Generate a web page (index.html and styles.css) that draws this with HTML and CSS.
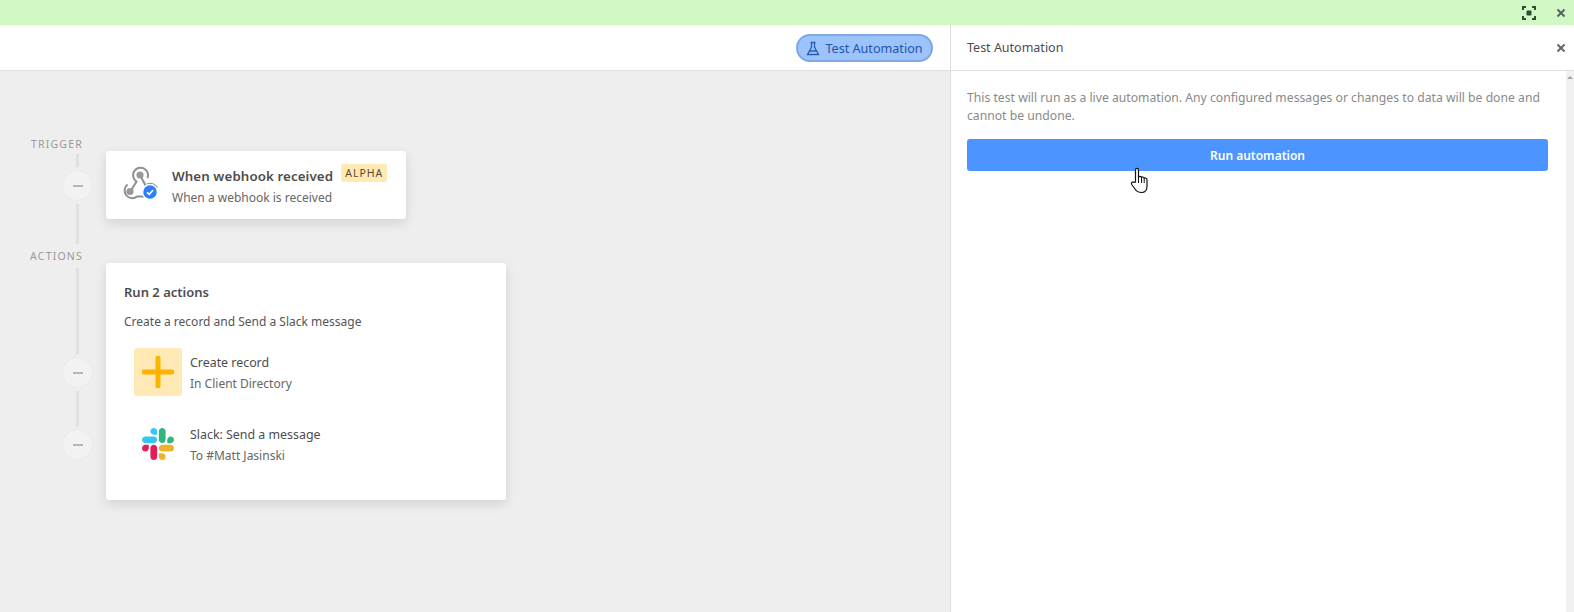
FILE: index.html
```html
<!DOCTYPE html>
<html lang="en">
<head>
  <meta charset="UTF-8">
  <meta name="viewport" content="width=device-width, initial-scale=1.0">
  <link rel="stylesheet" href="styles.css">
  <title>Test Automation</title>
</head>
<body>

  <div class="banner">
    <svg class="focusIcon" width="14" height="14" viewBox="0 0 14 14">
      <path d="M1 4V1H4M10 1H13V4M13 10V13H10M4 13H1V10" fill="none" stroke="#2f4a35" stroke-width="2"/>
      <rect x="4.5" y="4.5" width="5" height="5" rx="1" fill="#2f4a35"/>
    </svg>
    <svg class="closeIcon" width="10" height="10" viewBox="0 0 10 10">
      <path d="M1.5 1.5L8.5 8.5M8.5 1.5L1.5 8.5" stroke="#55655a" stroke-width="2"/>
    </svg>
  </div>

  <div class="main">
    <div class="left">
      <div class="toolbar">
        <button class="testBtn">
          <svg width="14" height="15" viewBox="0 0 14 15">
            <path d="M4.5 1.5H9.5M5.5 1.5V6L1.5 13.5H12.5L8.5 6V1.5M3.5 10H10.5" fill="none" stroke="#2a5cae" stroke-width="1.3"/>
          </svg>
          Test Automation
        </button>
      </div>

      <div class="canvas">
        <div class="rail">
          <div class="railLabel">TRIGGER</div>
          <div class="line lineA"></div>
          <div class="dot"></div>
          <div class="line lineB"></div>
          <div class="railLabel labelActions">ACTIONS</div>
          <div class="line lineC"></div>
          <div class="dot"></div>
          <div class="line lineD"></div>
          <div class="dot"></div>
        </div>

        <div class="cards">
          <div class="card triggerCard">
            <svg class="hookIcon" width="42" height="42" viewBox="0 0 42 42">
              <path d="M9 28L15.5 17.5A7.5 7.5 0 1 1 26.5 14" fill="none" stroke="#8f8f8f" stroke-width="2"/>
              <path d="M19 11L27 26" fill="none" stroke="#8f8f8f" stroke-width="2"/>
              <path d="M6.5 20.5A7.5 7.5 0 1 0 16 32.5H27" fill="none" stroke="#8f8f8f" stroke-width="2"/>
              <path d="M26 20.5A7.5 7.5 0 0 1 36 24" fill="none" stroke="#8f8f8f" stroke-width="2"/>
              <circle cx="19" cy="11" r="3.6" fill="#999"/>
              <circle cx="9" cy="27.5" r="3.6" fill="#999"/>
              <circle cx="29" cy="28" r="7.5" fill="#2d7ff9" stroke="#fff" stroke-width="1.5"/>
              <path d="M26 28.3L28.2 30.4L32.2 26" fill="none" stroke="#fff" stroke-width="1.6"/>
            </svg>
            <div class="triggerText">
              <div class="cardTitle">When webhook received<span class="badge">ALPHA</span></div>
              <div class="cardSub">When a webhook is received</div>
            </div>
          </div>

          <div class="card actionsCard">
            <div class="actionsTitle">Run 2 actions</div>
            <div class="actionsSub">Create a record and Send a Slack message</div>

            <div class="action">
              <div class="actionIcon plusBox">
                <svg width="32" height="32" viewBox="0 0 32 32">
                  <path d="M16 2V30M2 16H30" stroke="#fcb400" stroke-width="5" stroke-linecap="round"/>
                </svg>
              </div>
              <div>
                <div class="actionName">Create record</div>
                <div class="actionSub">In Client Directory</div>
              </div>
            </div>

            <div class="action">
              <div class="actionIcon">
                <svg width="32" height="32" viewBox="0 0 122.8 122.8">
                  <path d="M25.8 77.6c0 7.1-5.8 12.9-12.9 12.9S0 84.7 0 77.6s5.8-12.9 12.9-12.9h12.9v12.9z" fill="#e01e5a"/>
                  <path d="M32.3 77.6c0-7.1 5.8-12.9 12.9-12.9s12.9 5.8 12.9 12.9v32.3c0 7.1-5.8 12.9-12.9 12.9s-12.9-5.8-12.9-12.9V77.6z" fill="#e01e5a"/>
                  <path d="M45.2 25.8c-7.1 0-12.9-5.8-12.9-12.9S38.1 0 45.2 0s12.9 5.8 12.9 12.9v12.9H45.2z" fill="#36c5f0"/>
                  <path d="M45.2 32.3c7.1 0 12.9 5.8 12.9 12.9s-5.8 12.9-12.9 12.9H12.9C5.8 58.1 0 52.3 0 45.2s5.8-12.9 12.9-12.9h32.3z" fill="#36c5f0"/>
                  <path d="M97 45.2c0-7.1 5.8-12.9 12.9-12.9s12.9 5.8 12.9 12.9-5.8 12.9-12.9 12.9H97V45.2z" fill="#2eb67d"/>
                  <path d="M90.5 45.2c0 7.1-5.8 12.9-12.9 12.9s-12.9-5.8-12.9-12.9V12.9C64.7 5.8 70.5 0 77.6 0s12.9 5.8 12.9 12.9v32.3z" fill="#2eb67d"/>
                  <path d="M77.6 97c7.1 0 12.9 5.8 12.9 12.9s-5.8 12.9-12.9 12.9-12.9-5.8-12.9-12.9V97h12.9z" fill="#ecb22e"/>
                  <path d="M77.6 90.5c-7.1 0-12.9-5.8-12.9-12.9s5.8-12.9 12.9-12.9h32.3c7.1 0 12.9 5.8 12.9 12.9s-5.8 12.9-12.9 12.9H77.6z" fill="#ecb22e"/>
                </svg>
              </div>
              <div>
                <div class="actionName">Slack: Send a message</div>
                <div class="actionSub">To #Matt Jasinski</div>
              </div>
            </div>
          </div>
        </div>
      </div>
    </div>

    <div class="panel">
      <div class="panelHead">
        <span>Test Automation</span>
        <svg width="10" height="10" viewBox="0 0 10 10">
          <path d="M1.5 1.5L8.5 8.5M8.5 1.5L1.5 8.5" stroke="#666" stroke-width="2"/>
        </svg>
      </div>
      <div class="panelBody">
        <div class="panelContent">
          <p class="panelText">This test will run as a live automation. Any configured messages or changes to data will be done and cannot be undone.</p>
          <button class="runBtn">Run automation</button>
        </div>
        <div class="scrollbar"><span class="scrollArrow"></span></div>
      </div>
    </div>
  </div>

  <svg class="pointer" width="20" height="27" viewBox="0 0 20 27">
    <path d="M5.5 15V3.2C5.5 .8 8.5 .8 8.5 3.2V10.5C8.5 9 11.5 9 11.5 10.8C11.5 9.6 14.2 9.6 14.2 11.5C14.2 10.6 17 10.8 17 12.6V19C17 23 15 25.5 11.5 25.5C8 25.5 6.5 24.3 5 22L1.7 17.5C.5 15.5 3 14 4.3 15.5Z" fill="#fff" stroke="#111" stroke-width="1.2" stroke-linejoin="round"/>
    <path d="M8.5 10.5V16M11.5 10.8V16M14.2 11.5V16" fill="none" stroke="#111" stroke-width="1"/>
  </svg>

</body>
</html>
```

FILE: styles.css
```css
* {
  margin: 0;
  padding: 0;
  box-sizing: border-box;
}

body {
  width: 1574px;
  height: 612px;
  overflow: hidden;
  position: relative;
  background-color: #fff;
  font-family: 'Noto Sans', 'Open Sans', sans-serif;
  color: #4d4d4d;
}

.banner {
  height: 25px;
  background-color: #d1f7c4;
  display: flex;
  align-items: center;
  justify-content: flex-end;
  padding-right: 8px;
}

.focusIcon {
  margin-right: 20px;
}

.main {
  height: 587px;
  display: flex;
}

.left {
  width: 951px;
  border-right: 1px solid #dedede;
  display: flex;
  flex-direction: column;
}

.toolbar {
  height: 46px;
  background-color: #fff;
  border-bottom: 1px solid #dedede;
  display: flex;
  align-items: center;
  justify-content: flex-end;
  padding-right: 17px;
}

.testBtn {
  height: 28px;
  width: 137px;
  margin-top: 1px;
  border: 2px solid #7fa8e6;
  border-radius: 14px;
  background-color: #9cc3fb;
  color: #1f55a8;
  font-family: inherit;
  font-size: 12.6px;
  display: flex;
  align-items: center;
  justify-content: center;
  gap: 5px;
}

.canvas {
  flex: 1;
  background-color: #eee;
  display: flex;
}

.rail {
  width: 106px;
  padding-top: 63px;
  display: flex;
  flex-direction: column;
  align-items: flex-start;
}

.railLabel {
  width: 83px;
  height: 20px;
  line-height: 20px;
  text-align: right;
  font-size: 10.5px;
  letter-spacing: 1.2px;
  color: #9a9a9a;
}

.labelActions {
  height: 24px;
  line-height: 24px;
}

.line {
  width: 3px;
  margin-left: 76px;
  background-color: #e0e0e0;
}

.lineA {
  height: 13px;
  margin-bottom: 4px;
}

.lineB {
  height: 40px;
  margin-top: 4px;
}

.lineC {
  height: 86px;
  margin-bottom: 4px;
}

.lineD {
  height: 36px;
  margin-top: 4px;
  margin-bottom: 3px;
}

.dot {
  width: 29px;
  height: 29px;
  margin-left: 63px;
  border-radius: 50%;
  background-color: #f2f2f2;
  box-shadow: 0 0 2px rgba(0, 0, 0, .06);
  display: flex;
  align-items: center;
  justify-content: center;
}

.dot::after {
  content: '';
  width: 10px;
  height: 2px;
  background-color: #b5b5b5;
}

.cards {
  padding-top: 80px;
}

.card {
  background-color: #fff;
  border-radius: 3px;
  box-shadow: 0 4px 12px rgba(0, 0, 0, .12);
}

.triggerCard {
  width: 300px;
  height: 68px;
  display: flex;
  align-items: center;
  padding-left: 15px;
}

.hookIcon {
  flex: none;
  margin-right: 9px;
}

.triggerText {
  margin-top: 3px;
}

.cardTitle {
  display: flex;
  align-items: flex-start;
  font-size: 13.3px;
  font-weight: 600;
  line-height: 20px;
  color: #4d4d4d;
  letter-spacing: .1px;
}

.badge {
  margin-left: 8px;
  margin-top: -2px;
  height: 18px;
  padding: 0 4px;
  background-color: #ffeab6;
  border-radius: 2px;
  font-size: 10.5px;
  font-weight: 400;
  line-height: 18px;
  letter-spacing: 1px;
  color: #5a4a2a;
}

.cardSub {
  margin-top: 3px;
  font-size: 12px;
  line-height: 18px;
  color: #666;
}

.actionsCard {
  width: 400px;
  height: 237px;
  margin-top: 44px;
  padding: 19px 18px 0 18px;
}

.actionsTitle {
  font-size: 13px;
  font-weight: 600;
  line-height: 20px;
  color: #4d4d4d;
}

.actionsSub {
  margin-top: 11px;
  margin-bottom: 7px;
  font-size: 12px;
  line-height: 18px;
  color: #555;
}

.action {
  display: flex;
  align-items: center;
  height: 72px;
  padding-left: 10px;
}

.actionIcon {
  width: 48px;
  height: 48px;
  margin-right: 8px;
  margin-bottom: 4px;
  border-radius: 3px;
  display: flex;
  align-items: center;
  justify-content: center;
}

.plusBox {
  background-color: #ffeab6;
}

.actionName {
  font-size: 12.4px;
  line-height: 20px;
  color: #4d4d4d;
}

.actionSub {
  font-size: 12px;
  line-height: 22px;
  color: #666;
}

.panel {
  flex: 1;
  display: flex;
  flex-direction: column;
}

.panelHead {
  height: 46px;
  border-bottom: 1px solid #dedede;
  display: flex;
  align-items: center;
  justify-content: space-between;
  padding: 0 8px 0 16px;
  font-size: 12.5px;
  color: #4d4d4d;
}

.panelBody {
  flex: 1;
  display: flex;
}

.panelContent {
  flex: 1;
  padding: 18px 18px 0 16px;
}

.panelText {
  font-size: 12.2px;
  line-height: 18px;
  color: #898989;
}

.runBtn {
  display: block;
  width: 100%;
  height: 32px;
  margin-top: 14px;
  border: none;
  border-radius: 3px;
  background-color: #4c94ff;
  color: #fff;
  font-family: inherit;
  font-size: 12px;
  font-weight: 600;
}

.scrollbar {
  width: 8px;
  background-color: #f1f1f1;
  position: relative;
}

.scrollArrow {
  display: block;
  margin: 5px auto 0;
  width: 0;
  height: 0;
  border-left: 3px solid transparent;
  border-right: 3px solid transparent;
  border-bottom: 3px solid #a3a3a3;
}

.pointer {
  position: absolute;
  left: 1130px;
  top: 167px;
}
```
